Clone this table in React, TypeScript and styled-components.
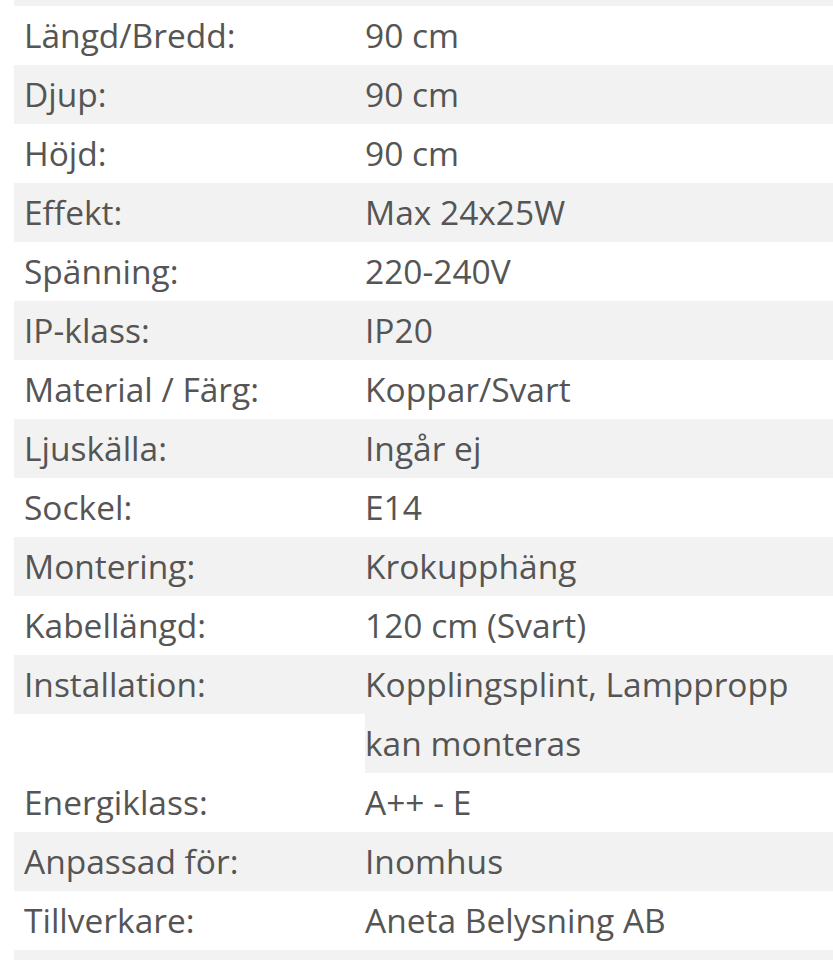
import React from "react";
import styled, { createGlobalStyle } from "styled-components";

const GlobalStyle = createGlobalStyle`
  html, body {
    margin: 0;
    padding: 0;
    background: #ffffff;
  }
  body {
    font-family: "Open Sans", "Noto Sans", sans-serif;
    overflow: hidden;
  }
`;

const Table = styled.div`
  display: flex;
  flex-direction: column;
  margin-left: 14px;
  width: calc(100% - 14px);
  color: #555555;
  font-size: 33.5px;
  line-height: 59px;
`;

const EdgeStrip = styled.div<{ $h: number }>`
  height: ${(p) => p.$h}px;
  background: #f2f2f2;
`;

const Row = styled.div`
  display: flex;
  align-items: flex-start;
`;

const Label = styled.div<{ $shade: boolean }>`
  width: 351px;
  flex: 0 0 351px;
  box-sizing: border-box;
  padding-left: 10px;
  background: ${(p) => (p.$shade ? "#f2f2f2" : "transparent")};
  white-space: nowrap;
`;

const Value = styled.div<{ $shade: boolean }>`
  flex: 1 1 auto;
  max-width: 440px;
  padding-right: 28px;
  background: ${(p) => (p.$shade ? "#f2f2f2" : "transparent")};
`;

const specs: [string, string][] = [
  ["Längd/Bredd:", "90 cm"],
  ["Djup:", "90 cm"],
  ["Höjd:", "90 cm"],
  ["Effekt:", "Max 24x25W"],
  ["Spänning:", "220-240V"],
  ["IP-klass:", "IP20"],
  ["Material / Färg:", "Koppar/Svart"],
  ["Ljuskälla:", "Ingår ej"],
  ["Sockel:", "E14"],
  ["Montering:", "Krokupphäng"],
  ["Kabellängd:", "120 cm (Svart)"],
  ["Installation:", "Kopplingsplint, Lamppropp kan monteras"],
  ["Energiklass:", "A++ - E"],
  ["Anpassad för:", "Inomhus"],
  ["Tillverkare:", "Aneta Belysning AB"],
];

export default function App() {
  return (
    <>
      <GlobalStyle />
      <Table>
        <EdgeStrip $h={6} />
        {specs.map(([label, value], i) => {
          const shade = i % 2 === 1;
          return (
            <Row key={label}>
              <Label $shade={shade}>{label}</Label>
              <Value $shade={shade}>{value}</Value>
            </Row>
          );
        })}
        <EdgeStrip $h={20} />
      </Table>
    </>
  );
}
